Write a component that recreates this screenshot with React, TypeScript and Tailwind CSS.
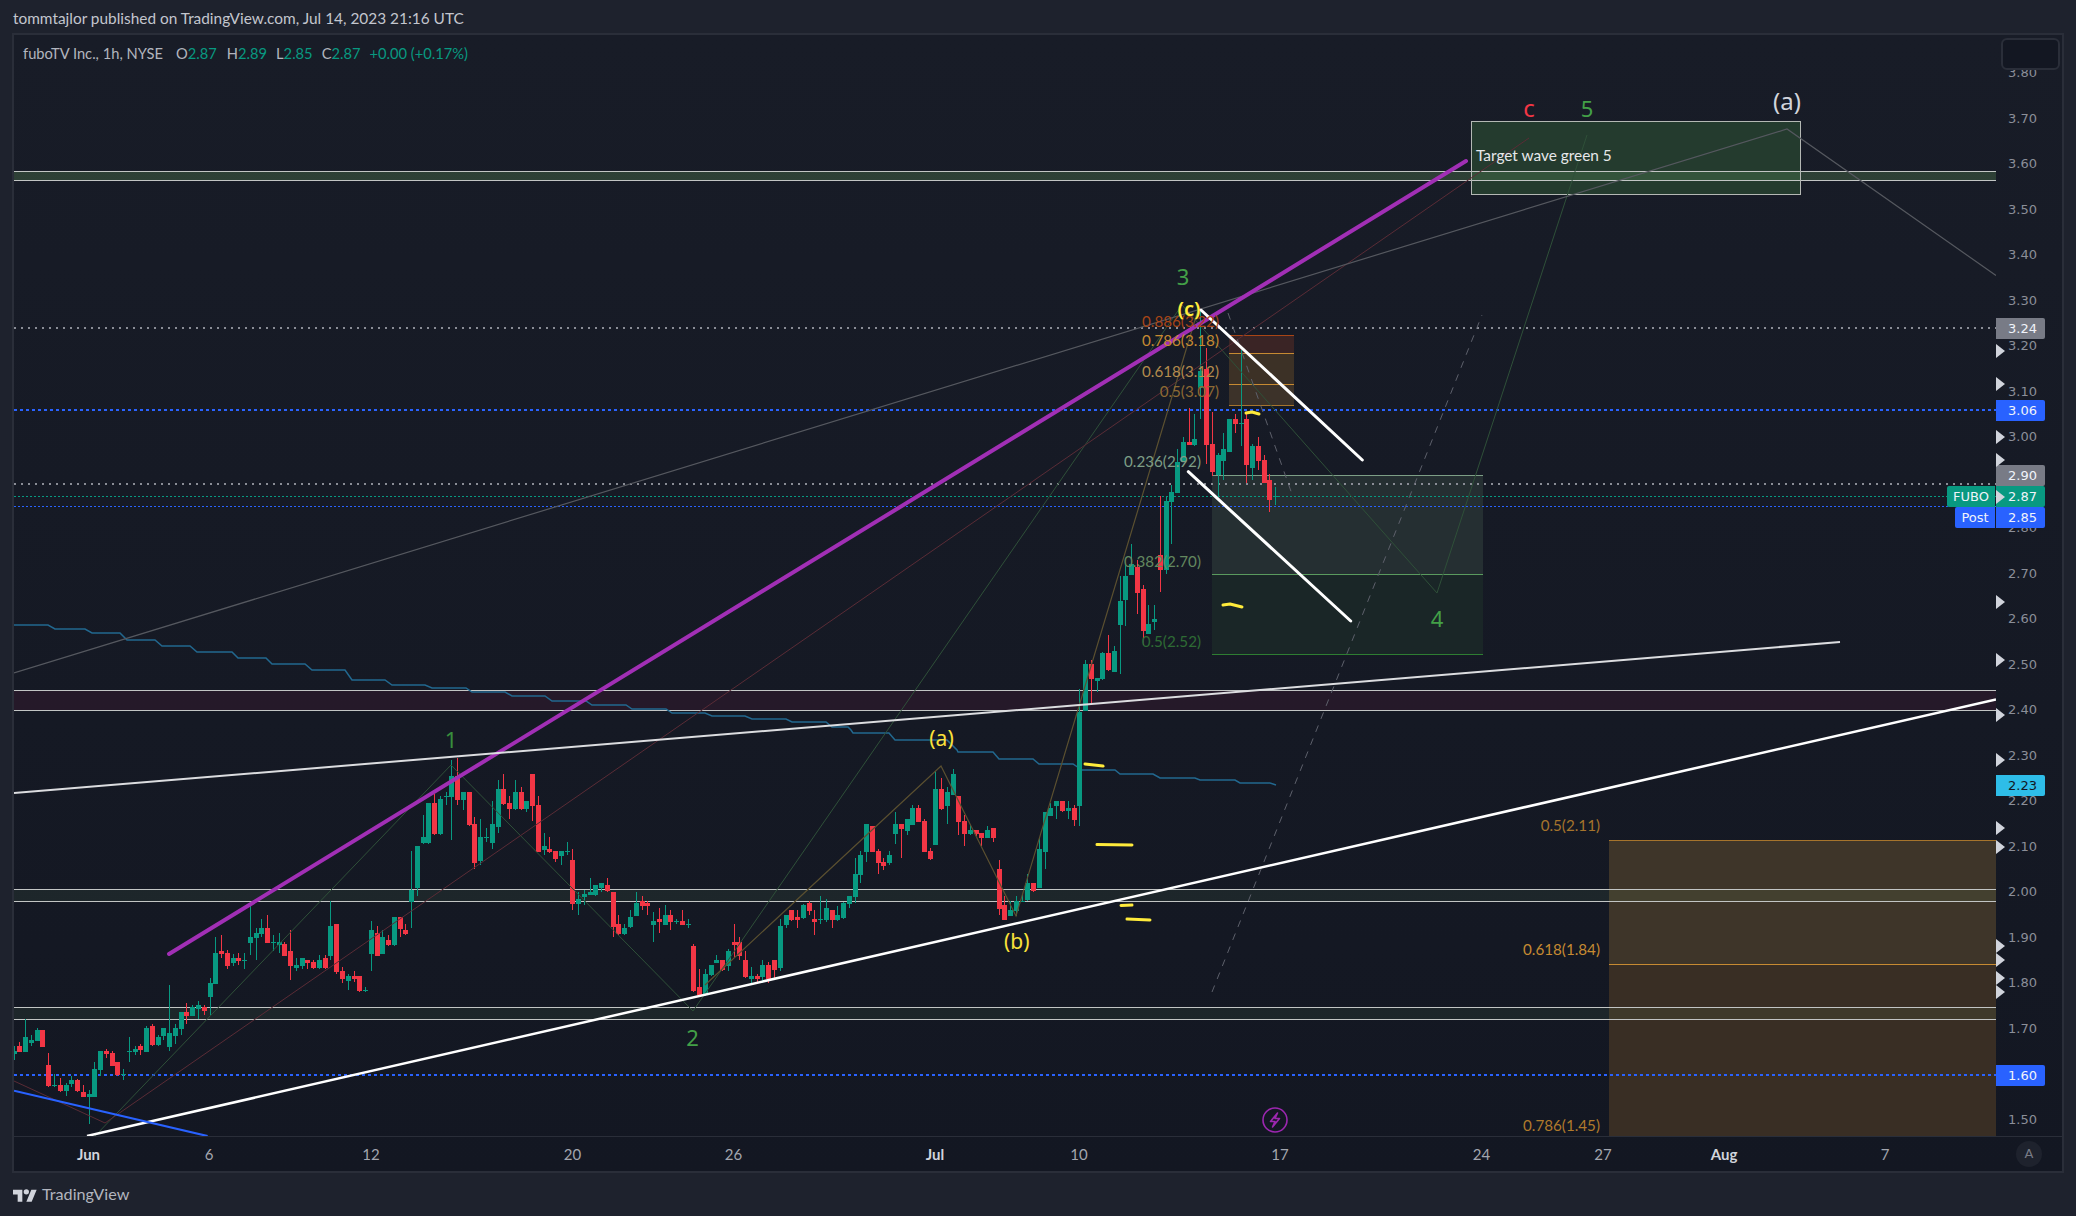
import React from "react";

type C = { x: number; t: number; b: number; h: number; l: number; up: boolean };

const parse = (ox: number, oy: number, s: string): C[] =>
  s
    .trim()
    .split(/\s*\|\s*/)
    .filter(Boolean)
    .map((r) => {
      const p = r.trim().split(/\s+/);
      const [x, t, b, h, l] = p.slice(0, 5).map(Number);
      return { x: ox + x / 3, t: oy + t / 3, b: oy + b / 3, h: oy + h / 3, l: oy + l / 3, up: p[5] === "g" };
    });

const candles: C[] = [
  ...parse(10, 880, `14 513 522 498 540 g|28 498 516 487 516 r|46 471 516 417 516 g|64 480 489 465 498 g|82 450 483 444 483 g|97 450 501 450 501 r|115 555 618 519 621 r|133 615 619 582 621 g|151 615 633 594 636 r|169 615 633 609 648 g|184 600 612 588 621 g|202 600 633 597 636 r|220 636 651 615 651 r|238 642 651 630 732 g|253 567 651 546 651 g|271 513 570 513 588 g|289 513 522 507 534 r|307 519 558 513 558 r|322 546 585 546 588 r|340 582 586 567 600 g|358 513 516 471 546 g|376 507 516 498 525 g|391 498 510 492 525 r|409 444 516 438 516 g|427 438 495 432 498 r|445 471 495 465 498 g|460 444 468 444 480 g|478 459 501 315 513 g|496 444 468 432 492 g|514 396 447 396 465 g|529 396 408 369 432 r|547 381 408 375 408 g|565 375 387 363 417 g|583 381 393 375 405 r|601 309 351 294 405 g|616 219 312 171 312 g|634 213 222 165 234 r|652 219 258 210 267 r|670 234 249 222 258 g|685 234 243 219 255 r|703 240 242 219 267 g|721 171 189 69 225 g|739 159 174 144 240 g|754 144 162 117 171 g|772 144 189 105 189 r|790 186 188 165 213 g|808 186 195 159 219 g|823 192 228 186 228 r|841 213 258 150 300 r|859 255 264 234 273 g|877 234 258 234 267 g|892 240 249 240 267 r|910 246 264 240 267 r|928 240 264 225 267 g|946 234 264 225 267 r|961 138 228 63 240 g|979 132 276 132 282 r|997 273 297 261 309 r|1015 288 303 282 330 g|1033 288 296 273 306 r|1048 288 333 288 336 r|1066 330 332 321 336 g|1084 150 222 123 273 g|1102 159 228 138 228 r|1117 171 222 150 222 g|1135 180 195 165 198 r|1153 111 195 111 198 g|1171 111 147 111 171 r|1186 150 162 132 165 r`),
  ...parse(390, 750, `63 420 456 303 534 g|82 288 414 288 438 g|100 261 279 195 282 g|115 159 279 159 282 g|133 159 252 132 255 r|151 147 252 138 255 g|169 138 140 126 165 g|184 78 141 30 270 g|202 78 150 24 165 r|220 126 150 126 180 g|238 126 225 126 228 r|253 222 339 201 357 r|271 261 333 207 345 g|289 261 264 234 276 g|307 222 279 153 297 g|325 117 231 90 249 g|340 117 162 72 165 r|358 159 177 138 207 r|376 126 177 90 180 g|394 126 177 111 180 r|409 153 177 153 186 g|427 72 168 72 213 r|445 165 306 138 306 r|463 288 300 249 315 g|478 297 306 261 309 r|496 303 327 303 336 r|514 303 318 303 345 g|532 303 305 276 315 g|547 330 462 297 480 r|565 447 462 426 495 g|583 432 441 420 465 g|601 426 435 384 435 g|616 405 435 405 438 g|634 399 414 399 426 g|652 405 423 384 426 r|670 426 531 426 561 r|685 522 552 495 555 r|703 534 552 522 555 g|721 501 531 480 534 g|739 459 498 426 498 g|757 453 468 438 480 r|772 459 468 453 495 r|790 513 525 486 576 g|808 507 516 474 549 r|826 495 525 465 525 g|841 495 516 480 540 r|859 513 515 507 522 g|877 513 525 480 525 r|895 522 524 507 534 g|910 588 723 582 726 r|928 711 735 657 735 r|946 672 735 657 738 g|964 645 675 645 678 g|979 630 639 615 639 g|997 630 660 630 663 r|1015 603 648 597 663 g|1033 576 584 522 621 r|1048 576 618 561 630 r|1066 630 681 603 684 r|1084 678 687 651 699 g|1102 678 687 672 699 r|1117 645 681 630 699 g|1135 645 687 636 699 r|1153 630 660 630 690 r|1171 528 654 507 663 g|1189 495 525 495 534 g|1204 480 510 480 513 r|1222 501 510 480 534 r|1240 465 504 462 507 g|1258 459 483 453 495 r|1273 507 516 480 555 r|1291 507 509 438 522 g|1309 474 510 447 516 g|1327 480 510 480 534 r|1342 495 510 468 513 g|1360 459 504 456 507 g|1378 438 462 438 474 g|1396 372 441 324 459 g|1411 315 375 303 399 g|1429 222 306 222 336 g|1447 228 306 228 306 r|1465 303 339 297 372 r|1480 336 348 324 360 r|1498 315 339 303 345 g`),
  ...parse(690, 750, `616 222 252 186 282 g|634 222 237 222 324 r|652 207 243 207 255 g|667 174 225 165 225 g|685 174 216 165 216 r|703 213 306 207 306 r|721 303 327 294 330 r|736 117 285 63 285 g|754 117 177 84 180 r|772 126 168 111 222 g|790 72 135 57 135 g|805 138 216 138 255 r|823 213 252 195 288 r|841 240 252 225 255 g|859 240 252 240 258 r|874 249 264 249 288 r|892 240 264 228 264 g|910 234 264 234 276 r|928 357 477 330 495 r|943 465 510 438 510 r|961 480 498 453 498 g|979 453 483 438 498 g|997 453 455 435 456 g|1012 399 450 372 453 g|1030 399 423 399 426 r|1048 297 414 264 414 g|1066 186 306 186 357 g|1081 174 198 159 198 g|1099 153 168 153 207 g|1117 153 183 153 186 r|1135 174 183 153 207 g|1153 174 210 165 228 r`),
  { x: 1079.3, t: 712, b: 806, h: 689, l: 826, up: true },
  ...parse(1040, 480, `136 552 693 540 693 g|154 552 597 540 675 r|172 594 603 594 636 g|187 519 597 516 600 g|205 519 570 465 573 r|223 513 576 498 576 g|241 363 435 288 582 g|256 288 360 252 438 g|274 252 285 192 285 g|292 261 339 240 402 r|310 327 453 315 495 r|325 432 462 375 462 g|343 417 426 375 450 g|361 225 270 48 336 r|379 63 270 48 282 g|394 36 66 15 192 g`),
  ...parse(1100, 260, `232 606 699 567 699 g|250 546 606 531 606 g|268 546 555 444 555 r|283 537 555 462 558 g|301 333 384 150 477 g|319 327 555 264 612 r|337 552 636 456 648 r|355 585 645 579 708 g|370 567 603 519 660 g|388 477 576 477 576 g|406 477 492 462 519 r|424 489 491 270 558 g|439 477 615 459 669 r|457 558 624 552 660 g|475 558 603 531 630 r|493 600 669 585 669 r|508 660 720 642 756 r|526 708 710 681 735 g`),
];

const ma =
  "14,625 48,625 55,629 85,629 92,633 120,633 127,640 155,640 162,646 190,646 197,652 232,652 238,658 266,658 272,664 305,664 312,670 345,670 352,680 385,680 392,685 425,685 432,688 466,688 472,692 505,692 512,696 545,696 552,701 586,701 592,705 626,705 632,709 666,709 672,713 705,713 712,716 745,716 752,719 786,719 792,722 826,722 832,727 848,727 851,730 853,733 889,733 895,740 947,740 957,750 958,752 993,752 999,759 1033,759 1039,764 1073,764 1082,770 1115,770 1120,774 1153,774 1160,778 1195,778 1200,780 1235,780 1240,783 1270,783 1276,785";

const prices = ["3.80","3.70","3.60","3.50","3.40","3.30","3.20","3.10","3.00","2.90","2.80","2.70","2.60","2.50","2.40","2.30","2.20","2.10","2.00","1.90","1.80","1.70","1.60","1.50"];

const zones = [
  { a: 171.5, b: 180.5, fill: "rgba(110,170,100,0.25)" },
  { a: 690.5, b: 710.5, fill: "rgba(233,30,99,0.08)" },
  { a: 889.5, b: 901.5, fill: "rgba(120,170,110,0.1)" },
  { a: 1007.5, b: 1019.5, fill: "rgba(120,170,110,0.1)" },
];

const dotted = [
  { y: 328, c: "#8a8d96", w: 2, d: "2 5" },
  { y: 410, c: "#2962ff", w: 2, d: "3 3" },
  { y: 484, c: "#8a8d96", w: 2, d: "2 5" },
  { y: 496.5, c: "#089981", w: 1, d: "2 2" },
  { y: 506.5, c: "#2962ff", w: 1, d: "2 2" },
  { y: 1075, c: "#2962ff", w: 2, d: "3 3" },
];

const arrows = [351, 383.5, 437, 460, 497, 602, 660, 715, 760, 828, 847, 946, 960, 978, 992];

const tags = [
  { top: 283, cls: "bg-[#787b86] text-[#f0f3fa]", t: "3.24" },
  { top: 365, cls: "bg-[#2962ff] text-[#f0f3fa]", t: "3.06" },
  { top: 430, cls: "bg-[#787b86] text-[#f0f3fa]", t: "2.90" },
  { top: 451, cls: "bg-[#089981] text-[#f0f3fa]", t: "2.87" },
  { top: 472, cls: "bg-[#2962ff] text-[#f0f3fa]", t: "2.85" },
  { top: 740, cls: "bg-[#2ebde8] text-[#131722]", t: "2.23" },
  { top: 1030, cls: "bg-[#2962ff] text-[#f0f3fa]", t: "1.60" },
];

const fibs = [
  { x: 1219, y: 327, c: "#a84516", t: "0.886(3.22)" },
  { x: 1219, y: 346, c: "#c68a32", t: "0.786(3.18)" },
  { x: 1219, y: 377, c: "#b48b4d", t: "0.618(3.12)" },
  { x: 1219, y: 397, c: "#8e6a34", t: "0.5(3.07)" },
  { x: 1201, y: 467, c: "#7d9e86", t: "0.236(2.92)" },
  { x: 1201, y: 567, c: "#63885f", t: "0.382(2.70)" },
  { x: 1201, y: 647, c: "#2e6b34", t: "0.5(2.52)" },
  { x: 1600, y: 831, c: "#a6742c", t: "0.5(2.11)" },
  { x: 1600, y: 955, c: "#c68a32", t: "0.618(1.84)" },
  { x: 1600, y: 1131, c: "#b07a2c", t: "0.786(1.45)" },
];

const waves = [
  { x: 451, y: 748, t: "1", c: "#388e3c", s: 22, w: 400 },
  { x: 692.5, y: 1046, t: "2", c: "#43a047", s: 22, w: 400 },
  { x: 1183, y: 285, t: "3", c: "#43a047", s: 22, w: 400 },
  { x: 1437, y: 627, t: "4", c: "#43a047", s: 22, w: 400 },
  { x: 1587, y: 117, t: "5", c: "#43a047", s: 22, w: 400 },
  { x: 1529, y: 117, t: "c", c: "#f23645", s: 24, w: 400 },
  { x: 1787, y: 110, t: "(a)", c: "#d1d4dc", s: 24, w: 400 },
  { x: 941.5, y: 746, t: "(a)", c: "#fbe13a", s: 21, w: 400 },
  { x: 1016.7, y: 949, t: "(b)", c: "#fbe13a", s: 21, w: 400 },
  { x: 1189, y: 316, t: "(c)", c: "#ffeb3b", s: 20, w: 600 },
];

const times = [
  { x: 88.5, t: "Jun", b: true }, { x: 209, t: "6" }, { x: 371, t: "12" }, { x: 572.5, t: "20" },
  { x: 733.5, t: "26" }, { x: 935, t: "Jul", b: true }, { x: 1079, t: "10" }, { x: 1280, t: "17" },
  { x: 1481.5, t: "24" }, { x: 1603, t: "27" }, { x: 1724, t: "Aug", b: true }, { x: 1885, t: "7" },
];

export default function App() {
  return (
    <div className="w-[2076px] h-[1216px] flex flex-col bg-[#1e222d] overflow-hidden [font-family:Lato,'Noto_Sans',sans-serif]">
      <div className="h-[33px] shrink-0 flex items-center pl-[13px] pt-[5px] text-[15.4px] text-[#c3c6ce] whitespace-nowrap">
        tommtajlor published on TradingView.com, Jul 14, 2023 21:16 UTC
      </div>

      <div className="ml-[12px] mr-[12px] h-[1140px] shrink-0 border-2 border-[#2a2e39] flex flex-col bg-linear-to-b from-[#181c27] to-[#131722]">
        <div className="h-[1101px] shrink-0 flex">
          <div className="relative w-[1982px] h-full shrink-0">
            <svg width={1982} height={1101} viewBox="14 35 1982 1101" className="block">
              {/* bottom right fib box */}
              <rect x={1609} y={840} width={387} height={125} fill="#3e3529" />
              <rect x={1609} y={965} width={387} height={171} fill="#392e24" />
              <line x1={1609} x2={1996} y1={840.5} y2={840.5} stroke="#a6742c" />
              <line x1={1609} x2={1996} y1={964.5} y2={964.5} stroke="#c68a32" />

              {/* horizontal zones */}
              {zones.map((z) => (
                <g key={z.a} shapeRendering="crispEdges">
                  <rect x={14} y={z.a} width={1982} height={z.b - z.a} fill={z.fill} />
                  <line x1={14} x2={1996} y1={z.a} y2={z.a} stroke="#c2c5c4" />
                  <line x1={14} x2={1996} y1={z.b} y2={z.b} stroke="#c2c5c4" />
                </g>
              ))}

              {/* orange fib box */}
              <g shapeRendering="crispEdges">
                <rect x={1229} y={335} width={65} height={18} fill="#3a2425" />
                <rect x={1229} y={353} width={65} height={31} fill="#3c3126" />
                <rect x={1229} y={384} width={65} height={22} fill="#3c3229" />
                <line x1={1229} x2={1294} y1={335.5} y2={335.5} stroke="#a84516" />
                <line x1={1229} x2={1294} y1={353.5} y2={353.5} stroke="#c68a32" />
                <line x1={1229} x2={1294} y1={384.5} y2={384.5} stroke="#c68a32" />
                <line x1={1229} x2={1294} y1={405.5} y2={405.5} stroke="#a6742c" />
              </g>

              {/* green fib box */}
              <g shapeRendering="crispEdges">
                <rect x={1212} y={475} width={271} height={99} fill="#252f32" />
                <rect x={1212} y={574} width={271} height={80} fill="#1a2627" />
                <line x1={1212} x2={1483} y1={475.5} y2={475.5} stroke="#7d9e86" />
                <line x1={1212} x2={1483} y1={574.5} y2={574.5} stroke="#5a9a5e" />
                <line x1={1212} x2={1483} y1={654.5} y2={654.5} stroke="#2e7d32" />
              </g>

              {/* target box */}
              <rect x={1471.5} y={121.5} width={329} height={73} fill="#243b2e" stroke="#b4b8b4" shapeRendering="crispEdges" />
              <rect x={1472} y={172} width={328} height={8} fill="#33533b" />
              <line x1={1472} x2={1800} y1={171.5} y2={171.5} stroke="#c2c5c4" shapeRendering="crispEdges" />
              <line x1={1472} x2={1800} y1={180.5} y2={180.5} stroke="#c2c5c4" shapeRendering="crispEdges" />

              {/* dotted price lines */}
              {dotted.map((d) => (
                <line key={d.y} x1={14} x2={1996} y1={d.y} y2={d.y} stroke={d.c} strokeWidth={d.w} strokeDasharray={d.d} />
              ))}

              {/* moving average */}
              <polyline points={ma} fill="none" stroke="#22688f" strokeWidth={1.5} />

              {/* candles */}
              <g shapeRendering="crispEdges">
                {candles.map((c, i) => {
                  const col = c.up ? "#089981" : "#f23645";
                  const top = Math.min(c.h, c.t);
                  const bot = Math.max(c.l, c.b);
                  const px = Math.round(c.x - 0.5);
                  return (
                    <g key={i} fill={col}>
                      <rect x={px} y={top} width={1} height={bot - top} />
                      <rect x={px - 2} y={c.t} width={5} height={Math.max(1, c.b - c.t)} />
                    </g>
                  );
                })}
              </g>

              {/* wave lines */}
              <polyline points="95,1136 451,765 693,1011 1182,305 1437,593 1587,135" fill="none" stroke="#2f5039" />
              <polyline points="14,1081 105,1123 1529,138" fill="none" stroke="#5a2c36" />
              <polyline points="14,673 1787,129 1996,275.5" fill="none" stroke="#55585f" strokeWidth={1.2} />
              <polyline points="705,985 941,766 1016,916 1198,310" fill="none" stroke="#5b5030" strokeWidth={1.2} />
              <line x1={1212} y1={992} x2={1482} y2={315} stroke="#5d606b" strokeDasharray="7 7" />
              <line x1={1228} y1={313} x2={1293} y2={497} stroke="#5d606b" strokeDasharray="7 7" />

              {/* trend lines */}
              <line x1={169} y1={954} x2={1466} y2={161} stroke="#a12fb5" strokeWidth={4} strokeLinecap="round" />
              <line x1={14} y1={793} x2={1840} y2={642} stroke="#dcdde0" strokeWidth={2} />
              <line x1={87} y1={1136} x2={1996} y2={699.4} stroke="#ffffff" strokeWidth={2.5} />
              <line x1={1201} y1={310} x2={1362.3} y2={460} stroke="#ffffff" strokeWidth={3} strokeLinecap="round" />
              <line x1={1188.3} y1={471.7} x2={1350.7} y2={621} stroke="#ffffff" strokeWidth={3} strokeLinecap="round" />
              <line x1={14} y1={1090.7} x2={207.6} y2={1136} stroke="#2962ff" strokeWidth={2.2} />

              {/* hand strokes */}
              <g fill="none" stroke="#ffeb3b" strokeWidth={3} strokeLinecap="round" strokeLinejoin="round">
                <polyline points="1246,413 1252,412 1259,414" />
                <polyline points="1223,605 1230,604 1242,607" />
                <polyline points="1085,764 1103,766" />
                <polyline points="1097,844.5 1132,845" />
                <polyline points="1121,905.5 1132,905" />
                <polyline points="1127,919 1150,920" />
              </g>

              {/* labels */}
              {fibs.map((f) => (
                <text key={f.t} x={f.x} y={f.y} fill={f.c} fontSize={15.2} textAnchor="end">{f.t}</text>
              ))}
              {waves.map((w) => (
                <text key={w.x} x={w.x} y={w.y} fill={w.c} fontSize={w.s} fontWeight={w.w} textAnchor="middle" fontFamily="'Noto Sans', sans-serif">{w.t}</text>
              ))}
              <text x={1476} y={161} fill="#e6e8ea" fontSize={15.4}>Target wave green 5</text>

              {/* lightning badge */}
              <g fill="none" stroke="#9c27b0" strokeWidth={1.6} strokeLinejoin="round" strokeLinecap="round">
                <circle cx={1275} cy={1120} r={12} />
                <path d="M1277.5 1113 L1270.5 1121.5 H1275 L1272.5 1127 L1279.5 1118.5 H1275 Z" />
              </g>
            </svg>

            <div className="absolute left-[9px] top-[9px] flex items-center text-[14.7px] leading-[18px] text-[#b2b5be] whitespace-nowrap">
              <span className="mr-[13px]">fuboTV Inc., 1h, NYSE</span>
              <span className="mr-[10px]">O<span className="text-[#089981]">2.87</span></span>
              <span className="mr-[9px]">H<span className="text-[#089981]">2.89</span></span>
              <span className="mr-[9px]">L<span className="text-[#089981]">2.85</span></span>
              <span className="mr-[9px]">C<span className="text-[#089981]">2.87</span></span>
              <span className="text-[#089981]">+0.00 (+0.17%)</span>
            </div>
          </div>

          <div className="relative w-[66px] h-full shrink-0">
            <div className="flex flex-col pt-[15px] pl-[12px] text-[13px] text-[#8b8e98] [font-family:'DejaVu_Sans',sans-serif]">
              {prices.map((p) => (
                <div key={p} className="h-[45.5px] shrink-0 flex items-center leading-none">{p}</div>
              ))}
            </div>

            {tags.map((t) => (
              <div
                key={t.t}
                style={{ top: t.top }}
                className={`absolute left-0 w-[49px] h-[21px] pl-[12px] flex items-center text-[13px] rounded-r-[2px] [font-family:'DejaVu_Sans',sans-serif] ${t.cls}`}
              >
                {t.t}
              </div>
            ))}
            <div className="absolute left-[-49px] top-[451px] w-[48px] h-[21px] rounded-l-[2px] bg-[#089981] text-[#f0f3fa] text-[13px] flex items-center justify-center [font-family:'DejaVu_Sans',sans-serif]">FUBO</div>
            <div className="absolute left-[-41px] top-[472px] w-[40px] h-[21px] rounded-l-[2px] bg-[#2962ff] text-[#f0f3fa] text-[13px] flex items-center justify-center [font-family:'DejaVu_Sans',sans-serif]">Post</div>

            {arrows.map((y) => (
              <svg key={y} width={9} height={14} viewBox="0 0 9 14" style={{ top: y - 35 - 7 }} className="absolute left-0">
                <path d="M0 0 L9 7 L0 14 Z" fill="#d1d4dc" />
              </svg>
            ))}

            <div className="absolute left-[5px] top-[3px] w-[59px] h-[32px] rounded-[6px] border-2 border-[#2a2e39] bg-[#131722]" />
          </div>
        </div>

        <div className="h-[35px] shrink-0 flex border-t border-[#2a2e39]">
          <svg width={1982} height={34} viewBox="14 1137 1982 34" className="block shrink-0">
            {times.map((t) => (
              <text key={t.x} x={t.x} y={1160} fill={t.b ? "#d1d4dc" : "#a3a6af"} fontSize={15} fontWeight={t.b ? 700 : 400} textAnchor="middle">{t.t}</text>
            ))}
          </svg>
          <div className="flex-1 flex items-center justify-center">
            <div className="w-[26px] h-[26px] rounded-full bg-[#1e222d] flex items-center justify-center text-[13px] text-[#787b86] [font-family:'DejaVu_Sans',sans-serif]">A</div>
          </div>
        </div>
      </div>

      <div className="flex-1 flex items-center pl-[13px] gap-[5px] text-[16.2px] text-[#b2b5be]">
        <svg width={24} height={15} viewBox="0 0 36 22" fill="#d1d4dc">
          <path d="M14 22H7V11H0V4h14v18zM28 22h-8l7.5-18h8L28 22z" />
          <circle cx={20} cy={7} r={4} />
        </svg>
        <span>TradingView</span>
      </div>
    </div>
  );
}
